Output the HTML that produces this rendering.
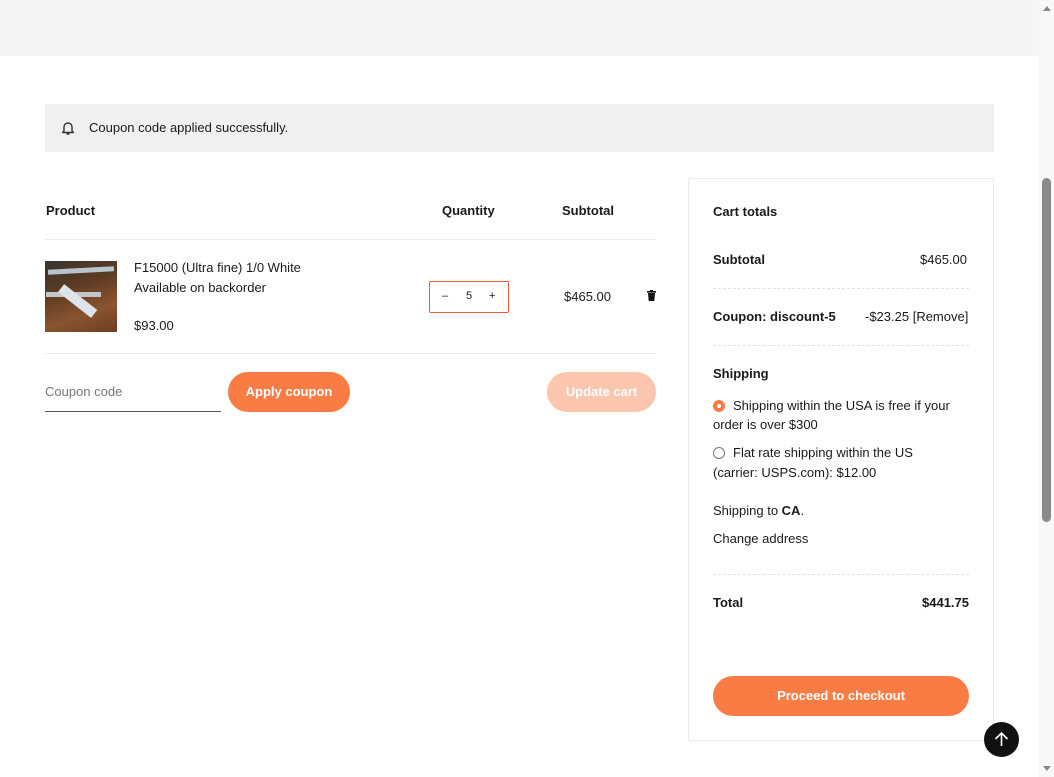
<!DOCTYPE html>
<html><head><meta charset="utf-8"><style>
*{box-sizing:border-box;margin:0;padding:0}
body{width:1054px;height:777px;overflow:hidden;background:#fff;font-family:"Liberation Sans",sans-serif;color:#1a1a1a;font-size:13px;position:relative}
.a{position:absolute}
.hr{position:absolute;height:1px;background:#ececec}
.dash{position:absolute;height:0;border-top:1px dashed #e2e2e2}
b{font-weight:bold}
</style></head><body>
<div class="a" style="left:0;top:0;width:1039px;height:56px;background:#f5f5f6"></div>
<div class="a" style="left:1039px;top:0;width:15px;height:777px;background:#f8f8f8"></div>
<div class="a" style="left:1042px;top:178px;width:9px;height:344px;background:#8a8a8a;border-radius:5px"></div>
<div class="a" style="left:1043px;top:6px;width:0;height:0;border-left:4px solid transparent;border-right:4px solid transparent;border-bottom:5px solid #888"></div>
<div class="a" style="left:1043px;top:766px;width:0;height:0;border-left:4px solid transparent;border-right:4px solid transparent;border-top:5px solid #888"></div>

<div class="a" style="left:45px;top:104px;width:949px;height:48px;background:#f0f0f1"></div>
<svg class="a" style="left:61px;top:120px" width="14" height="16" viewBox="0 0 14 16"><path d="M3 11V7a4 4 0 0 1 8 0v4l1.5 1.5h-11z M5.5 14h3" fill="none" stroke="#333" stroke-width="1.4" stroke-linejoin="round"/></svg>
<div class="a" style="left:89px;top:120px">Coupon code applied successfully.</div>

<div class="a" style="left:46px;top:203px;font-weight:bold">Product</div>
<div class="a" style="left:442px;top:203px;font-weight:bold">Quantity</div>
<div class="a" style="left:562px;top:203px;font-weight:bold">Subtotal</div>
<div class="hr" style="left:45px;top:239px;width:611px"></div>

<div class="a" style="left:45px;top:261px;width:72px;height:71px;background:linear-gradient(160deg,#3a3430 0%,#5a3a22 35%,#8a5430 70%,#6a3e22 100%)"></div>
<div class="a" style="left:48px;top:268px;width:66px;height:5px;background:#b8c4cc;transform:rotate(-3deg)"></div>
<div class="a" style="left:46px;top:292px;width:55px;height:5px;background:#c0c8cc"></div>
<div class="a" style="left:58px;top:292px;width:10px;height:42px;background:#dde4ea;transform:rotate(-52deg);transform-origin:top left"></div>
<div class="a" style="left:134px;top:260px">F15000 (Ultra fine) 1/0 White</div>
<div class="a" style="left:134px;top:280px">Available on backorder</div>
<div class="a" style="left:134px;top:318px">$93.00</div>
<div class="a" style="left:429px;top:281px;width:80px;height:32px;border:1px solid #e85a35;border-radius:2px;font-size:11px">
<span class="a" style="left:12px;top:8px">–</span><span class="a" style="left:36px;top:8px">5</span><span class="a" style="left:59px;top:8px">+</span></div>
<div class="a" style="left:564px;top:289px">$465.00</div>
<svg class="a" style="left:647px;top:290px" width="9" height="11" viewBox="0 0 9 11"><rect x="0" y="1" width="9" height="1.6" fill="#111"/><rect x="3" y="0" width="3" height="1.5" fill="#111"/><path d="M1 3h7l-.7 8H1.7z" fill="#111"/></svg>
<div class="hr" style="left:45px;top:353px;width:611px"></div>

<div class="a" style="left:45px;top:384px;color:#777">Coupon code</div>
<div class="a" style="left:45px;top:411px;width:176px;height:1px;background:#555"></div>
<div class="a" style="left:228px;top:372px;width:122px;height:40px;border-radius:20px;background:#f97c45;color:#fff;font-weight:bold;text-align:center;line-height:40px">Apply coupon</div>
<div class="a" style="left:547px;top:372px;width:109px;height:40px;border-radius:20px;background:#fcc5ae;color:#fff;font-weight:bold;text-align:center;line-height:40px">Update cart</div>

<div class="a" style="left:688px;top:178px;width:306px;height:563px;border:1px solid #ececec"></div>
<div class="a" style="left:713px;top:204px;font-weight:bold">Cart totals</div>
<div class="a" style="left:713px;top:252px;font-weight:bold">Subtotal</div>
<div class="a" style="left:920px;top:252px">$465.00</div>
<div class="dash" style="left:713px;top:288px;width:256px"></div>
<div class="a" style="left:713px;top:309px;font-weight:bold">Coupon: discount-5</div>
<div class="a" style="left:865px;top:309px">-$23.25 [Remove]</div>
<div class="dash" style="left:713px;top:345px;width:256px"></div>
<div class="a" style="left:713px;top:366px;font-weight:bold">Shipping</div>
<div class="a" style="left:713px;top:400px;width:12px;height:12px;border-radius:50%;background:#f97c45"></div>
<div class="a" style="left:717px;top:404px;width:4px;height:4px;border-radius:50%;background:#fff"></div>
<div class="a" style="left:713px;top:396px;width:260px;line-height:19px;text-indent:20px">Shipping within the USA is free if your order is over $300</div>
<div class="a" style="left:713px;top:447px;width:12px;height:12px;border-radius:50%;border:1px solid #777"></div>
<div class="a" style="left:713px;top:443px;width:230px;line-height:20px;text-indent:20px">Flat rate shipping within the US (carrier: USPS.com): $12.00</div>
<div class="a" style="left:713px;top:503px">Shipping to <b>CA</b>.</div>
<div class="a" style="left:713px;top:531px">Change address</div>
<div class="dash" style="left:713px;top:574px;width:256px"></div>
<div class="a" style="left:713px;top:595px;font-weight:bold">Total</div>
<div class="a" style="left:922px;top:595px;font-weight:bold">$441.75</div>
<div class="a" style="left:713px;top:676px;width:256px;height:40px;border-radius:20px;background:#f97c45;color:#fff;font-weight:bold;text-align:center;line-height:40px">Proceed to checkout</div>

<div class="a" style="left:984px;top:722px;width:35px;height:35px;border-radius:50%;background:#111"></div>
<svg class="a" style="left:992px;top:730px" width="19" height="19" viewBox="0 0 19 19"><path d="M9.5 16V3M3.5 9l6-6 6 6" fill="none" stroke="#fff" stroke-width="1.6"/></svg>
</body></html>
